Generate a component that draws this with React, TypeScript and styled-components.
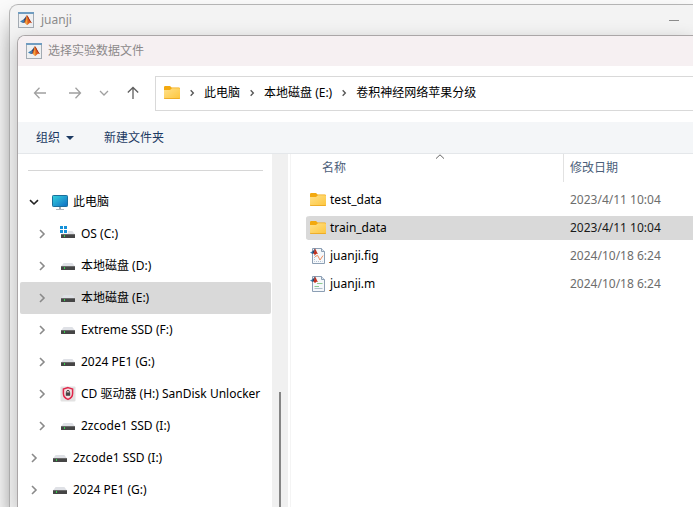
import React from "react";
import styled, { createGlobalStyle } from "styled-components";

const GlobalStyle = createGlobalStyle`
  * { box-sizing: border-box; }
  html, body { margin: 0; }
  body {
    background: #fafafa;
    color: #000;
    font: 12px/16px "Noto Sans", "Noto Sans CJK SC", sans-serif;
    overflow: hidden;
  }
  button {
    padding: 0;
    border: 0;
    background: none;
    color: inherit;
    font: inherit;
    white-space: nowrap;
  }
  svg { display: block; flex: none; }
`;

const Desktop = styled.div`
  display: flex;
  min-height: 100vh;
  padding: 4px 0 0 9px;
`;

const AppWindow = styled.div`
  flex: 1;
  min-width: 0;
  display: flex;
  flex-direction: column;
  border: solid #b4b4b4;
  border-width: 1px 0 0 1px;
  border-radius: 9px 0 0 0;
  background: #f3f3f3;
  box-shadow: 0 16px 22px rgba(0, 0, 0, 0.32);
`;

const AppTitleBar = styled.header`
  display: flex;
  align-items: center;
  gap: 7px;
  height: 30px;
  padding: 0 14px 0 8px;
  color: #8b8b8b;
`;

const TitleText = styled.h1`
  flex: 1;
  margin: 0;
  font-size: 12px;
  font-weight: 400;
`;

const MinimizeButton = styled.button`
  display: grid;
  place-items: center;
  height: 24px;
  color: #8b8b8b;
`;

const Dialog = styled.section`
  flex: 1;
  display: flex;
  flex-direction: column;
  margin-left: 7px;
  border: solid #aaa6a7;
  border-width: 1px 0 0 1px;
  border-radius: 8px 0 0 0;
  background: #fff;
  box-shadow: 0 6px 18px rgba(0, 0, 0, 0.24);
  overflow: hidden;
`;

const DialogTitleBar = styled.header`
  display: flex;
  align-items: center;
  gap: 6px;
  height: 30px;
  padding-left: 8px;
  background: #f6f0f2;
  color: #8c898a;
`;

const NavBar = styled.div`
  display: flex;
  align-items: center;
  height: 56px;
  padding: 0 0 2px 4px;
`;

const NavButton = styled.button<{ $width: number; $color?: string }>`
  display: grid;
  place-items: center;
  width: ${(p) => p.$width}px;
  height: 32px;
  color: ${(p) => p.$color ?? "#a0a0a0"};
`;

const AddressBar = styled.nav`
  flex: 1;
  display: flex;
  align-items: center;
  height: 35px;
  margin-left: 5px;
  padding-left: 8px;
  border: 1px solid #d9d9d9;
  border-right: 0;
  white-space: nowrap;
`;

const CrumbArrow = styled.span`
  display: grid;
  place-items: center;
  width: 24px;
  color: #555;
`;

const CommandBar = styled.div`
  display: flex;
  align-items: center;
  gap: 30px;
  height: 32px;
  padding-left: 18px;
  border-bottom: 1px solid #e4e7ea;
  background: #f4f6f8;
  color: #1c3a63;
`;

const Command = styled.button`
  display: flex;
  align-items: center;
  gap: 6px;
  color: #1c3a63;
`;

const Body = styled.div`
  flex: 1;
  display: flex;
`;

const Sidebar = styled.aside`
  flex: none;
  display: flex;
  border-right: 1px solid #f4f4f4;
  padding-right: 2px;
`;

const TreePane = styled.div`
  width: 254px;
  padding: 16px 1px 0 2px;
`;

const Divider = styled.hr`
  height: 1px;
  margin: 0 8px 15px;
  border: 0;
  background: #d6d6d6;
`;

const Tree = styled.ul`
  margin: 0;
  padding: 0;
  list-style: none;
`;

const TreeRow = styled.li<{ $level: number; $selected?: boolean }>`
  display: flex;
  align-items: center;
  height: 32px;
  padding-left: ${(p) => 8 + p.$level * 8}px;
  border-radius: 2px;
  background: ${(p) => (p.$selected ? "#d9d9d9" : "transparent")};
`;

const Toggle = styled.button<{ $open?: boolean }>`
  display: grid;
  place-items: center;
  width: 12px;
  height: 24px;
  margin-right: 12px;
  color: ${(p) => (p.$open ? "#222" : "#8a8a8a")};
`;

const TreeLink = styled.button`
  display: flex;
  align-items: center;
  gap: 5px;
`;

const ScrollTrack = styled.div`
  display: flex;
  justify-content: center;
  width: 16px;
  padding-top: 238px;
  background: #f0f0f0;
`;

const ScrollThumb = styled.div`
  width: 2px;
  background: #858585;
`;

const FilePane = styled.main`
  flex: 1;
  min-width: 0;
  padding-left: 15px;
`;

const FileTable = styled.table`
  width: 100%;
  table-layout: fixed;
  border-collapse: separate;
  border-spacing: 0;
`;

const NameCol = styled.col`
  width: 257px;
`;

const HeadCell = styled.th`
  position: relative;
  height: 32px;
  padding: 0;
  vertical-align: top;
  text-align: left;
  font-weight: 400;
  color: #4c607a;
`;

const HeadLabel = styled.div<{ $indent: number; $divided?: boolean }>`
  display: flex;
  align-items: center;
  height: 28px;
  padding-left: ${(p) => p.$indent}px;
  border-left: ${(p) => (p.$divided ? "1px solid #e2e2e2" : "0")};
`;

const SortMark = styled.span`
  position: absolute;
  top: 0;
  left: 50%;
  color: #666;
`;

const FileRow = styled.tr<{ $selected?: boolean }>`
  td {
    background-color: ${(p) => (p.$selected ? "#d9d9d9" : "transparent")};
    color: ${(p) => (p.$selected ? "#1a1a1a" : "#6d6d6d")};
  }
`;

const Cell = styled.td`
  height: 28px;
  padding: 0 0 0 7px;
  border: solid transparent;
  border-width: 2px 0;
  background-clip: padding-box;
  white-space: nowrap;
  &:first-child {
    padding-left: 4px;
    border-radius: 4px 0 0 4px;
  }
`;

const FileName = styled.button`
  display: flex;
  align-items: center;
  gap: 4px;
  color: #000;
`;

const MatlabIcon = () => (
  <svg width="16" height="16" viewBox="0 0 16 16" aria-hidden="true">
    <rect x="0.5" y="0.5" width="15" height="15" fill="#eef0f2" stroke="#a3abb3" />
    <rect width="16" height="2" fill="#6f9cc0" />
    <path d="M2 9.4 5.4 7.4 7 8.6 4.8 11Z" fill="#3d7fb4" />
    <path d="M5.4 7.4C7 6.6 7.6 4.4 8.8 3.2L8 9.4 6.4 10.8 4.8 11 6.6 8.8Z" fill="#28466f" />
    <path d="M8.8 3C10.4 4.4 11.8 8.6 14 11.2 12.4 10.4 11.4 10.8 10 12.4 8.8 13.4 8.2 12 7 10.8 5.6 10.6 7.8 7.6 8.8 3Z" fill="#dd5a1c" />
    <path d="M8.8 3.6C9.6 6 9.2 9.4 9.6 12.6 8.6 13 8.2 12 7 10.8 8.4 9 8.4 6.2 8.8 3.6Z" fill="#f2a541" />
    <path d="M8.8 3C10.4 4.4 11.8 8.6 14 11.2 11.8 9.8 10 7 8.8 3Z" fill="#98281a" />
  </svg>
);

const FolderIcon = () => (
  <svg width="16" height="16" viewBox="0 0 16 16" aria-hidden="true">
    <defs>
      <linearGradient id="folderFront" x1="0" y1="0" x2="1" y2="1">
        <stop offset="0" stopColor="#ffe08a" />
        <stop offset="1" stopColor="#fdc63c" />
      </linearGradient>
    </defs>
    <path d="M0 2.2Q0 1 1.2 1H6L7.6 2.6H14.8Q16 2.6 16 3.8V8H0Z" fill="#f3a90f" />
    <path d="M0 5H6L8 3.2H15Q16 3.2 16 4.2V13Q16 14 15 14H1Q0 14 0 13Z" fill="url(#folderFront)" />
    <path d="M0 12.8Q0 14 1 14H15Q16 14 16 12.8L15 13.2H1Z" fill="#e9a31b" />
  </svg>
);

const ComputerIcon = () => (
  <svg width="16" height="16" viewBox="0 0 16 16" aria-hidden="true">
    <defs>
      <linearGradient id="screen" x1="0" y1="0" x2="1" y2="1">
        <stop offset="0" stopColor="#35d3dd" />
        <stop offset="1" stopColor="#0e6cc4" />
      </linearGradient>
    </defs>
    <rect x="0.5" y="1.5" width="15" height="11" rx="0.8" fill="url(#screen)" stroke="#1b6f9c" />
    <rect x="7" y="13" width="2" height="2" fill="#a5abb2" />
    <rect x="4" y="15" width="8" height="1" fill="#b3b8bf" />
  </svg>
);

const DriveIcon = ({ system }: { system?: boolean }) => (
  <svg width="16" height="16" viewBox="0 0 16 16" aria-hidden="true">
    <path d="M3.6 5H12.4L15 8.4H1Z" fill="#dfe1e6" />
    <rect x="1" y="8" width="14" height="4" rx="0.6" fill="#454545" />
    <rect x="1" y="8" width="14" height="1" fill="#6b6b6b" />
    <rect x="4" y="9" width="1" height="2" fill="#35d04a" />
    {system && (
      <>
        <rect x="0" y="0" width="8" height="7.6" fill="#fff" />
        <path d="M0 0h3v3H0zM4 0h3v3H4zM0 4h3v3H0zM4 4h3v3H4z" fill="#1590d8" />
      </>
    )}
  </svg>
);

const ShieldIcon = () => (
  <svg width="16" height="16" viewBox="0 0 16 16" aria-hidden="true">
    <rect x="0.5" y="0.5" width="15" height="15" rx="1" fill="#e2e2e2" />
    <path d="M8 1.6 12.6 3V7.4Q12.6 11.4 8 13.4 3.4 11.4 3.4 7.4V3Z" fill="#f3dfe2" stroke="#e0274a" strokeWidth="1.5" />
    <rect x="5.8" y="6.4" width="4.4" height="3.4" fill="#444" />
    <path d="M6.6 6.6V5.8a1.4 1.4 0 0 1 2.8 0V6.6" fill="none" stroke="#444" strokeWidth="1" />
  </svg>
);

const DocIcon = ({ kind }: { kind: "fig" | "m" }) => (
  <svg width="16" height="16" viewBox="0 0 16 16" aria-hidden="true">
    <path d="M2.5 0.5H11.5L14.5 3.5V15.5H2.5Z" fill="#f5f8fb" stroke="#8c9fb4" />
    <path d="M11.5 0.5V3.5H14.5" fill="#dce5ee" stroke="#8c9fb4" />
    {kind === "fig" ? (
      <>
        <path d="M4.5 7V13.5H12.5" fill="none" stroke="#b3c1d1" strokeDasharray="1 1" />
        <path d="M5 8.6 7.6 7.4 10 12 13 7.6" fill="none" stroke="#f08c5a" />
      </>
    ) : (
      <>
        <path d="M7 7.5h5.5M4.5 10.5H9" stroke="#8ccb92" />
        <path d="M4.5 12.5h8" stroke="#b0bfcc" />
      </>
    )}
    <path d="M0 4.6 2.6 3.2 4.4 4.4 2.6 6Z" fill="#3f83b5" />
    <path d="M2.6 3.2C3.6 2.6 4 1.2 5 0.4L4.6 4.6 2.6 6Z" fill="#27446c" />
    <path d="M5 0.2C6 1.4 6.4 4 8.2 6 6.8 5.4 6 6 5.2 7 4.6 7 4.2 6 3.4 5.8 4.4 4 4.8 2 5 0.2Z" fill="#c2301c" />
  </svg>
);

const Chevron = ({ dir, size = 12 }: { dir: "right" | "down"; size?: number }) => (
  <svg width={size} height={size} viewBox="0 0 12 12" fill="none" stroke="currentColor" strokeWidth={size < 12 ? 2 : 1.6} aria-hidden="true">
    <path d={dir === "right" ? "M4 2 8 6 4 10" : "M2 4.2 6 8 10 4.2"} />
  </svg>
);

const Arrow = ({ path }: { path: string }) => (
  <svg width="14" height="14" viewBox="0 0 14 14" fill="none" stroke="currentColor" strokeWidth="1.3" aria-hidden="true">
    <path d={path} />
  </svg>
);

type Node = { label: string; level: number; icon: "pc" | "os" | "drive" | "cd"; open?: boolean; selected?: boolean };

const nodes: Node[] = [
  { label: "此电脑", level: 0, icon: "pc", open: true },
  { label: "OS (C:)", level: 1, icon: "os" },
  { label: "本地磁盘 (D:)", level: 1, icon: "drive" },
  { label: "本地磁盘 (E:)", level: 1, icon: "drive", selected: true },
  { label: "Extreme SSD (F:)", level: 1, icon: "drive" },
  { label: "2024 PE1 (G:)", level: 1, icon: "drive" },
  { label: "CD 驱动器 (H:) SanDisk Unlocker", level: 1, icon: "cd" },
  { label: "2zcode1 SSD (I:)", level: 1, icon: "drive" },
  { label: "2zcode1 SSD (I:)", level: 0, icon: "drive" },
  { label: "2024 PE1 (G:)", level: 0, icon: "drive" },
];

const nodeIcons = {
  pc: <ComputerIcon />,
  os: <DriveIcon system />,
  drive: <DriveIcon />,
  cd: <ShieldIcon />,
};

const files = [
  { name: "test_data", date: "2023/4/11 10:04", icon: <FolderIcon /> },
  { name: "train_data", date: "2023/4/11 10:04", icon: <FolderIcon />, selected: true },
  { name: "juanji.fig", date: "2024/10/18 6:24", icon: <DocIcon kind="fig" /> },
  { name: "juanji.m", date: "2024/10/18 6:24", icon: <DocIcon kind="m" /> },
];

const crumbs = ["此电脑", "本地磁盘 (E:)", "卷积神经网络苹果分级"];

export default function App() {
  return (
    <>
      <GlobalStyle />
      <Desktop>
        <AppWindow>
          <AppTitleBar>
            <MatlabIcon />
            <TitleText>juanji</TitleText>
            <MinimizeButton aria-label="最小化">
              <svg width="10" height="1" aria-hidden="true">
                <rect width="10" height="1" fill="currentColor" />
              </svg>
            </MinimizeButton>
          </AppTitleBar>
          <Dialog role="dialog" aria-labelledby="dialog-title">
            <DialogTitleBar>
              <MatlabIcon />
              <TitleText as="h2" id="dialog-title">选择实验数据文件</TitleText>
            </DialogTitleBar>
            <NavBar>
              <NavButton $width={35} aria-label="后退">
                <Arrow path="M13 7H1.5M6.5 1.8 1.5 7 6.5 12.2" />
              </NavButton>
              <NavButton $width={35} aria-label="前进">
                <Arrow path="M1 7H12.5M7.5 1.8 12.5 7 7.5 12.2" />
              </NavButton>
              <NavButton $width={24} aria-label="最近位置">
                <Arrow path="M3 5 7 9 11 5" />
              </NavButton>
              <NavButton $width={34} $color="#5f5f5f" aria-label="向上">
                <Arrow path="M7 13V1.5M1.8 6.5 7 1.5 12.2 6.5" />
              </NavButton>
              <AddressBar aria-label="地址">
                <FolderIcon />
                {crumbs.map((c) => (
                  <React.Fragment key={c}>
                    <CrumbArrow>
                      <Chevron dir="right" size={8} />
                    </CrumbArrow>
                    <button>{c}</button>
                  </React.Fragment>
                ))}
              </AddressBar>
            </NavBar>
            <CommandBar>
              <Command>
                组织
                <svg width="8" height="4" viewBox="0 0 8 4" aria-hidden="true">
                  <path d="M0 0H8L4 4Z" fill="currentColor" />
                </svg>
              </Command>
              <Command>新建文件夹</Command>
            </CommandBar>
            <Body>
              <Sidebar>
                <TreePane>
                  <Divider />
                  <Tree>
                    {nodes.map((n, i) => (
                      <TreeRow key={i} $level={n.level} $selected={n.selected}>
                        <Toggle $open={n.open} aria-label={n.open ? "折叠" : "展开"}>
                          <Chevron dir={n.open ? "down" : "right"} />
                        </Toggle>
                        <TreeLink>
                          {nodeIcons[n.icon]}
                          {n.label}
                        </TreeLink>
                      </TreeRow>
                    ))}
                  </Tree>
                </TreePane>
                <ScrollTrack>
                  <ScrollThumb />
                </ScrollTrack>
              </Sidebar>
              <FilePane>
                <FileTable>
                  <colgroup>
                    <NameCol />
                    <col />
                  </colgroup>
                  <thead>
                    <tr>
                      <HeadCell aria-sort="ascending">
                        <HeadLabel $indent={16}>名称</HeadLabel>
                        <SortMark>
                          <svg width="10" height="5" viewBox="0 0 10 5" fill="none" stroke="currentColor" aria-hidden="true">
                            <path d="M1 4.6 5 0.8 9 4.6" />
                          </svg>
                        </SortMark>
                      </HeadCell>
                      <HeadCell>
                        <HeadLabel $indent={6} $divided>修改日期</HeadLabel>
                      </HeadCell>
                    </tr>
                  </thead>
                  <tbody>
                    {files.map((f) => (
                      <FileRow key={f.name} $selected={f.selected}>
                        <Cell>
                          <FileName>
                            {f.icon}
                            {f.name}
                          </FileName>
                        </Cell>
                        <Cell>{f.date}</Cell>
                      </FileRow>
                    ))}
                  </tbody>
                </FileTable>
              </FilePane>
            </Body>
          </Dialog>
        </AppWindow>
      </Desktop>
    </>
  );
}
